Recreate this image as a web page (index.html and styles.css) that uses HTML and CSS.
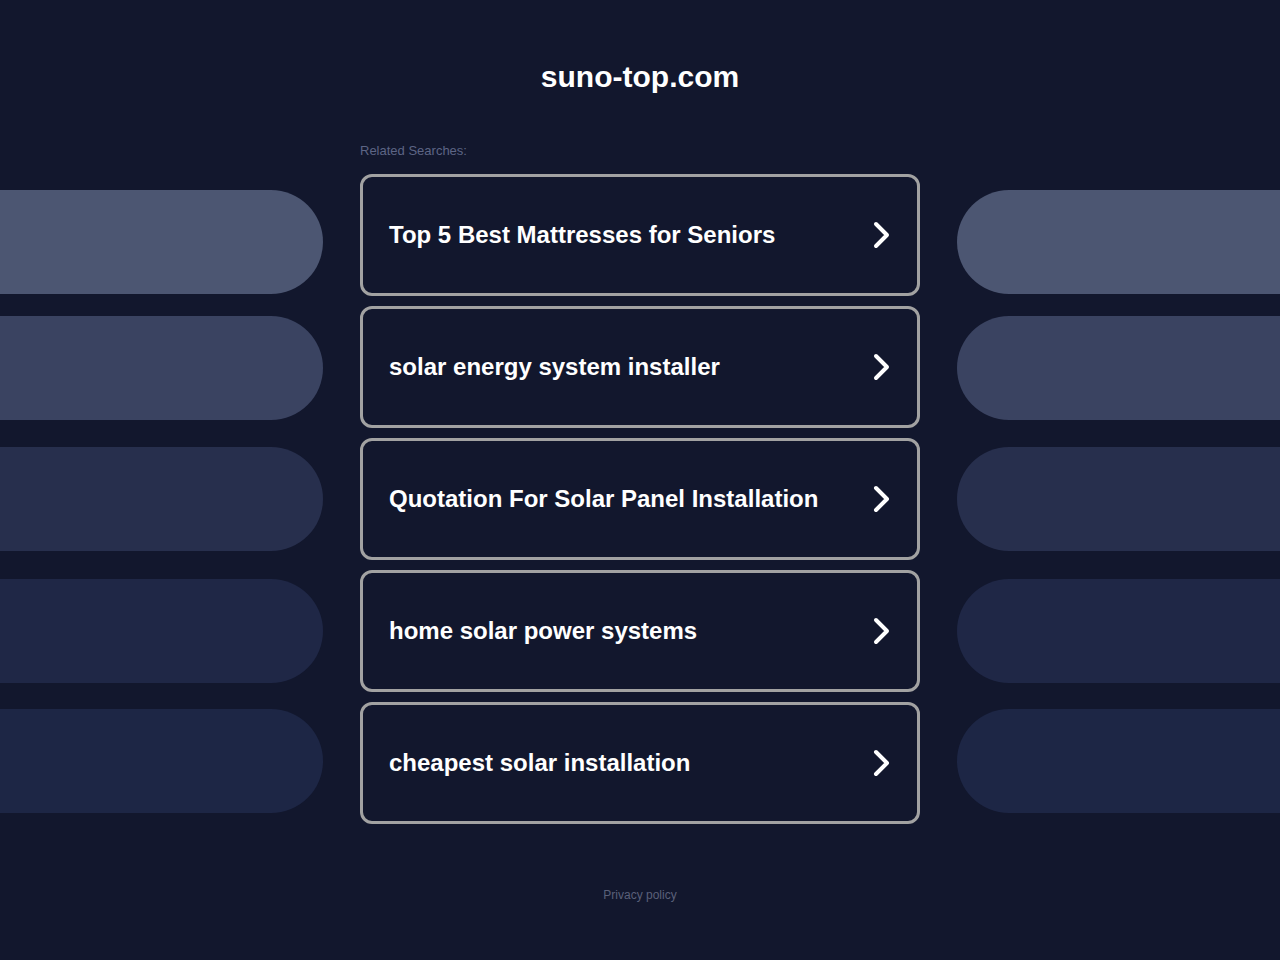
FILE: index.html
```html
<!DOCTYPE html>
<html lang="en">
<head>
<meta charset="utf-8">
<title>suno-top.com</title>
<link rel="stylesheet" href="styles.css">
</head>
<body>
<header class="site-header">
  <h1 class="domain">suno-top.com</h1>
</header>
<main class="layout">
  <div class="label-row">
    <span class="label">Related Searches:</span>
  </div>
  <div class="row">
    <div class="pill pill-left tone-1"></div>
    <a class="card" href="#"><span class="card-text">Top 5 Best Mattresses for Seniors</span>
      <svg class="chev" width="20" height="28" viewBox="0 0 20 28"><polyline points="4,3 15,14 4,25" fill="none" stroke="#fff" stroke-width="4" stroke-linecap="round" stroke-linejoin="round"/></svg></a>
    <div class="pill pill-right tone-1"></div>
  </div>
  <div class="row">
    <div class="pill pill-left tone-2"></div>
    <a class="card" href="#"><span class="card-text">solar energy system installer</span>
      <svg class="chev" width="20" height="28" viewBox="0 0 20 28"><polyline points="4,3 15,14 4,25" fill="none" stroke="#fff" stroke-width="4" stroke-linecap="round" stroke-linejoin="round"/></svg></a>
    <div class="pill pill-right tone-2"></div>
  </div>
  <div class="row">
    <div class="pill pill-left tone-3"></div>
    <a class="card" href="#"><span class="card-text">Quotation For Solar Panel Installation</span>
      <svg class="chev" width="20" height="28" viewBox="0 0 20 28"><polyline points="4,3 15,14 4,25" fill="none" stroke="#fff" stroke-width="4" stroke-linecap="round" stroke-linejoin="round"/></svg></a>
    <div class="pill pill-right tone-3"></div>
  </div>
  <div class="row">
    <div class="pill pill-left tone-4"></div>
    <a class="card" href="#"><span class="card-text">home solar power systems</span>
      <svg class="chev" width="20" height="28" viewBox="0 0 20 28"><polyline points="4,3 15,14 4,25" fill="none" stroke="#fff" stroke-width="4" stroke-linecap="round" stroke-linejoin="round"/></svg></a>
    <div class="pill pill-right tone-4"></div>
  </div>
  <div class="row">
    <div class="pill pill-left tone-5"></div>
    <a class="card" href="#"><span class="card-text">cheapest solar installation</span>
      <svg class="chev" width="20" height="28" viewBox="0 0 20 28"><polyline points="4,3 15,14 4,25" fill="none" stroke="#fff" stroke-width="4" stroke-linecap="round" stroke-linejoin="round"/></svg></a>
    <div class="pill pill-right tone-5"></div>
  </div>
</main>
<footer class="site-footer">
  <a class="privacy" href="#">Privacy policy</a>
</footer>
</body>
</html>
```
FILE: styles.css
```css
html, body {
  margin: 0;
  padding: 0;
}

body {
  background: #12172d;
  font-family: "Liberation Sans", Arial, sans-serif;
  color: #fff;
  min-height: 960px;
}

.site-header {
  padding-top: 59px;
  text-align: center;
}

.domain {
  margin: 0;
  font-size: 30px;
  line-height: 36px;
  font-weight: bold;
  color: #fff;
}

.layout {
  display: grid;
  grid-template-columns: 323px 560px 323px;
  column-gap: 37px;
  row-gap: 10px;
  margin-top: 46px;
}

.label-row {
  grid-column: 2;
  margin-bottom: 5px;
}

.label {
  font-size: 13px;
  line-height: 16px;
  color: #5d6585;
}

.row {
  display: contents;
}

/* decorative side bars, nudged per row */
.pill {
  height: 104px;
  align-self: center;
  position: relative;
  top: 0;
}

.pill-left {
  grid-column: 1;
  border-radius: 0 52px 52px 0;
}

.pill-right {
  grid-column: 3;
  border-radius: 52px 0 0 52px;
}

.tone-1 { background: #4c5672; top: 7px; }
.tone-2 { background: #3a4361; top: 1px; }
.tone-3 { background: #272f4d; }
.tone-4 { background: #1f2746; }
.tone-5 { background: #1d2645; top: -2px; }

.card {
  grid-column: 2;
  box-sizing: border-box;
  height: 122px;
  border: 3px solid #a2a2a2;
  border-radius: 12px;
  padding: 0 25px 0 26px;
  display: flex;
  align-items: center;
  justify-content: space-between;
  text-decoration: none;
  color: #fff;
}

.card-text {
  font-size: 24px;
  font-weight: bold;
  line-height: 30px;
}

.chev {
  flex: none;
  display: block;
}

.site-footer {
  text-align: center;
  margin-top: 61px;
}

.privacy {
  font-size: 12px;
  line-height: 14px;
  color: #5a6079;
  text-decoration: none;
}
```
